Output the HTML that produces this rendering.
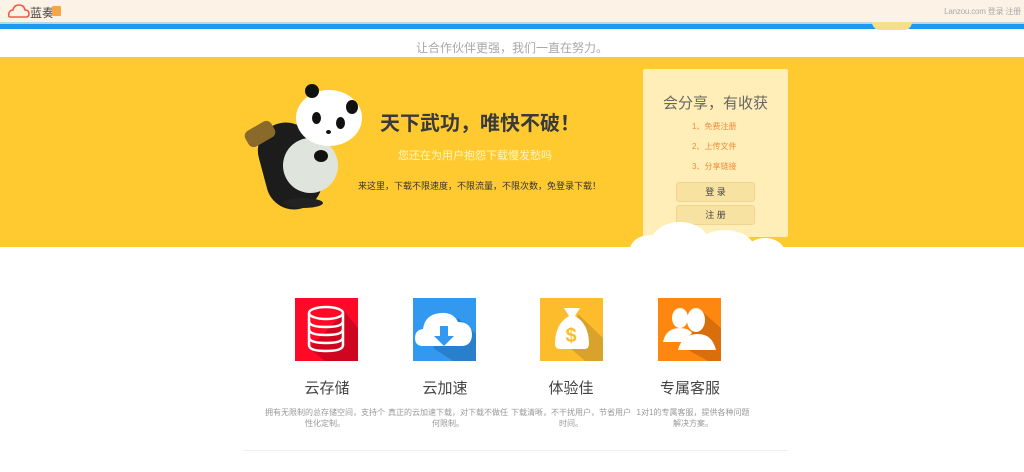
<!DOCTYPE html>
<html><head><meta charset="utf-8"><style>
*{margin:0;padding:0;box-sizing:border-box}
body{width:1024px;height:472px;overflow:hidden;background:#fff;font-family:"Liberation Sans","Noto Sans CJK SC",sans-serif;position:relative}
.abs{position:absolute}
.t{white-space:nowrap}
</style></head><body>
<div class="abs" style="left:0;top:0;width:1024px;height:22px;background:#fdf2e6"></div>
<svg class="abs" style="left:8px;top:4px" width="22" height="14" viewBox="0 0 22 14"><path d="M2 13 Q0 13 1 9 Q2 6 5 6 Q6 1 11 1 Q16 1 17 6 Q21 6 21 10 Q21 13 18 13 Z" fill="none" stroke="#f05a4a" stroke-width="1.6"/></svg>
<div class="abs t" style="left:30px;top:4px;font-size:12px;color:#444">蓝奏</div>
<div class="abs" style="left:52px;top:6px;width:9px;height:10px;background:#f7a545;border-radius:1px"></div>
<div class="abs t" style="right:3px;top:6px;font-size:8px;color:#aaa;letter-spacing:-0.2px">Lanzou.com 登录 注册</div>
<div class="abs" style="left:0;top:22px;width:1024px;height:2px;background:#b8d8e8"></div>
<div class="abs" style="left:0;top:24px;width:1024px;height:5px;background:#1a9bf0"></div>
<div class="abs" style="left:872px;top:22px;width:40px;height:8px;background:#f4e08a;border-radius:0 0 10px 10px"></div>
<div class="abs t" style="left:0;top:39px;width:1024px;text-align:center;font-size:12px;color:#a8a8a8">让合作伙伴更强，我们一直在努力。</div>
<div class="abs" style="left:0;top:57px;width:1024px;height:190px;background:#ffca30"></div>
<!-- panda -->
<div class="abs" style="left:262px;top:122px;width:56px;height:88px;background:#1c1c1c;border-radius:28px;transform:rotate(-15deg)"></div>
<div class="abs" style="left:245px;top:125px;width:30px;height:18px;background:#8a6a2a;border-radius:6px;transform:rotate(-30deg)"></div>
<div class="abs" style="left:283px;top:138px;width:55px;height:55px;background:#dfe5dc;border-radius:50%"></div>
<div class="abs" style="left:283px;top:198px;width:40px;height:10px;background:#222;border-radius:50%"></div>
<div class="abs" style="left:296px;top:90px;width:66px;height:56px;background:#fff;border-radius:50%"></div>
<div class="abs" style="left:305px;top:84px;width:14px;height:14px;background:#111;border-radius:50%"></div>
<div class="abs" style="left:346px;top:100px;width:12px;height:14px;background:#111;border-radius:50%"></div>
<div class="abs" style="left:312px;top:112px;width:9px;height:12px;background:#111;border-radius:50%"></div>
<div class="abs" style="left:336px;top:117px;width:9px;height:12px;background:#111;border-radius:50%"></div>
<div class="abs" style="left:326px;top:130px;width:5px;height:4px;background:#111;border-radius:50%"></div>
<div class="abs" style="left:314px;top:150px;width:14px;height:12px;background:#111;border-radius:50%"></div>
<div class="abs t" style="left:380px;top:107px;font-size:20px;font-weight:bold;color:#3a3a3a">天下武功，唯快不破！</div>
<div class="abs t" style="left:387px;top:147px;width:176px;text-align:center;font-size:11px;color:#fff6c0">您还在为用户抱怨下载慢发愁吗</div>
<div class="abs t" style="left:358px;top:179px;font-size:9px;color:#333">来这里，下载不限速度，不限流量，不限次数，免登录下载！</div>
<!-- card -->
<div class="abs" style="left:643px;top:69px;width:145px;height:168px;background:#ffeeb8;border-radius:2px"></div>
<div class="abs t" style="left:643px;top:92px;width:145px;text-align:center;font-size:15px;color:#666">会分享，有收获</div>
<div class="abs t" style="left:692px;top:121px;font-size:8px;color:#f28a3a">1、免费注册</div>
<div class="abs t" style="left:692px;top:141px;font-size:8px;color:#f28a3a">2、上传文件</div>
<div class="abs t" style="left:692px;top:161px;font-size:8px;color:#f28a3a">3、分享链接</div>
<div class="abs" style="left:676px;top:182px;width:79px;height:20px;background:#f7e2a2;border:1px solid #efd690;border-radius:3px;font-size:9px;color:#444;text-align:center;line-height:18px">登 录</div>
<div class="abs" style="left:676px;top:205px;width:79px;height:20px;background:#f7e2a2;border:1px solid #efd690;border-radius:3px;font-size:9px;color:#444;text-align:center;line-height:18px">注 册</div>
<div class="abs" style="left:630px;top:235px;width:40px;height:30px;background:#fff;border-radius:50%"></div>
<div class="abs" style="left:650px;top:222px;width:60px;height:45px;background:#fff;border-radius:50%"></div>
<div class="abs" style="left:695px;top:230px;width:60px;height:40px;background:#fff;border-radius:50%"></div>
<div class="abs" style="left:745px;top:238px;width:40px;height:30px;background:#fff;border-radius:50%"></div>
<!-- icons -->
<svg class="abs" style="left:295px;top:298px" width="63" height="63" viewBox="0 0 63 63"><rect width="63" height="63" fill="#fe0a26"/><polygon points="50,14 63,30 63,63 30,63 14,50" fill="#d00620"/><g fill="none" stroke="#fff" stroke-width="2.5"><ellipse cx="31" cy="15" rx="17" ry="6"/><path d="M14 15v32q0 6 17 6t17-6V15M14 23q0 6 17 6t17-6M14 31q0 6 17 6t17-6M14 39q0 6 17 6t17-6"/></g></svg>
<svg class="abs" style="left:413px;top:298px" width="63" height="63" viewBox="0 0 63 63"><rect width="63" height="63" fill="#3399f0"/><polygon points="45,20 63,36 63,63 40,63 20,50" fill="#2a7fcc"/><path d="M10 48Q2 48 2 40Q2 32 10 31Q12 16 28 15Q40 14 45 24Q58 24 59 36Q59 48 48 48Z" fill="#fff"/><path d="M27 28h8v10h6l-10 10-10-10h6z" fill="#3399f0"/></svg>
<svg class="abs" style="left:540px;top:298px" width="63" height="63" viewBox="0 0 63 63"><rect width="63" height="63" fill="#fdbc2c"/><polygon points="38,16 63,40 63,63 45,63 30,50" fill="#d9a22a"/><path d="M24 10h16l-5 8q14 8 14 28q0 5-5 5H20q-5 0-5-5q0-20 14-28z" fill="#fff"/><text x="31" y="44" font-size="20" font-weight="bold" fill="#fdbc2c" text-anchor="middle" font-family="Liberation Sans">$</text></svg>
<svg class="abs" style="left:658px;top:298px" width="63" height="63" viewBox="0 0 63 63"><rect width="63" height="63" fill="#fe8710"/><polygon points="40,10 63,30 63,63 50,63 30,52" fill="#d86e0c"/><ellipse cx="22" cy="20" rx="8" ry="10" fill="#fff"/><path d="M5 44q3-14 17-14q8 0 12 5l-10 9z" fill="#fff"/><ellipse cx="38" cy="22" rx="9" ry="12" fill="#fff"/><path d="M20 52q4-16 20-16q14 0 18 16z" fill="#fff"/></svg>
<div class="abs t" style="left:267px;top:377px;width:120px;text-align:center;font-size:15px;color:#444">云存储</div>
<div class="abs t" style="left:385px;top:377px;width:120px;text-align:center;font-size:15px;color:#444">云加速</div>
<div class="abs t" style="left:511px;top:377px;width:120px;text-align:center;font-size:15px;color:#444">体验佳</div>
<div class="abs t" style="left:630px;top:377px;width:120px;text-align:center;font-size:15px;color:#444">专属客服</div>
<div class="abs" style="left:265px;top:407px;width:120px;text-align:center;font-size:8px;line-height:11px;color:#999">拥有无限制的总存储空间，支持个性化定制。</div>
<div class="abs" style="left:388px;top:407px;width:120px;text-align:center;font-size:8px;line-height:11px;color:#999">真正的云加速下载，对下载不做任何限制。</div>
<div class="abs" style="left:511px;top:407px;width:120px;text-align:center;font-size:8px;line-height:11px;color:#999">下载清晰，不干扰用户，节省用户时间。</div>
<div class="abs" style="left:633px;top:407px;width:120px;text-align:center;font-size:8px;line-height:11px;color:#999">1对1的专属客服，提供各种问题解决方案。</div>
<div class="abs" style="left:243px;top:450px;width:545px;height:1px;background:#eee"></div>
</body></html>
